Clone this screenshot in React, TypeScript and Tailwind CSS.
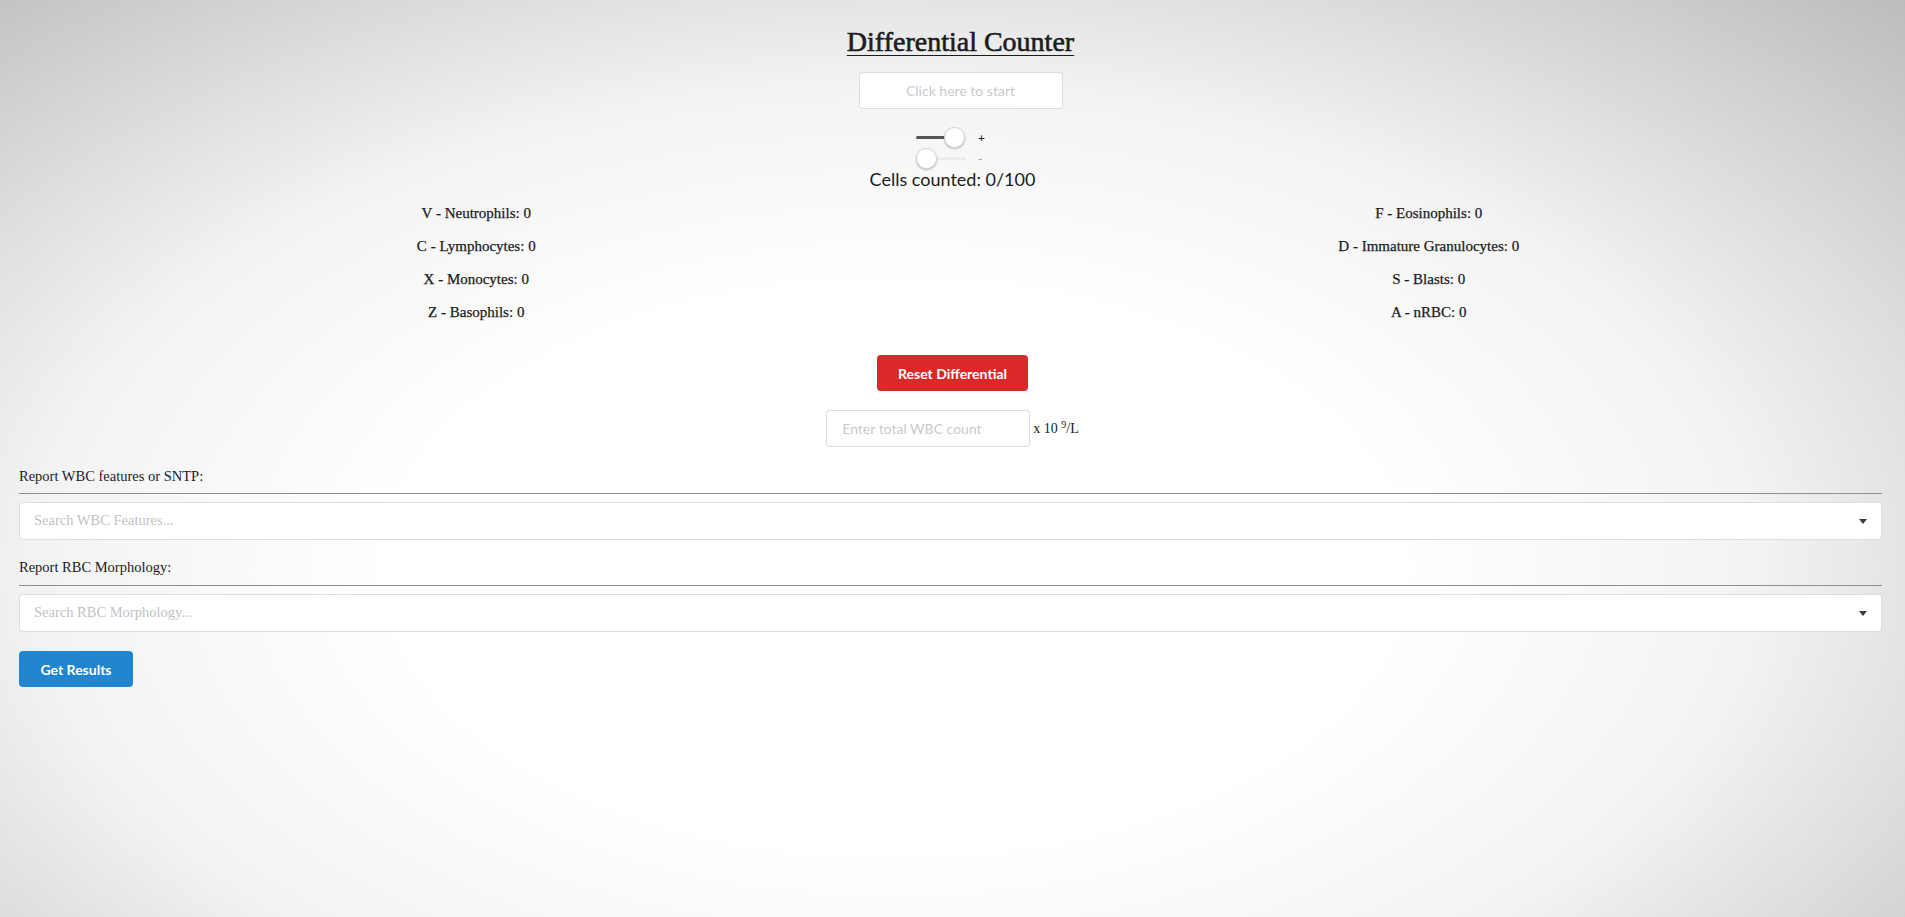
import React, { useState } from "react";

const serif = "font-['Liberation_Serif',serif]";
const lato = "font-['Lato','Liberation_Sans',sans-serif]";

type Cell = { key: string; name: string };

const leftCells: Cell[] = [
    { key: "V", name: "Neutrophils" },
    { key: "C", name: "Lymphocytes" },
    { key: "X", name: "Monocytes" },
    { key: "Z", name: "Basophils" },
];

const rightCells: Cell[] = [
    { key: "F", name: "Eosinophils" },
    { key: "D", name: "Immature Granulocytes" },
    { key: "S", name: "Blasts" },
    { key: "A", name: "nRBC" },
];

const Caret = () => (
    <svg width="8" height="5" viewBox="0 0 8 5" className="shrink-0">
        <path d="M0 0 L8 0 L4 5 Z" fill="#3a3a3a" />
    </svg>
);

// little range slider, thumb sits over the track
const MiniSlider = ({ value }: { value: number }) => {
    const pos = Math.round(value * 28);
    return (
        <div className="relative w-[50px] h-[21px]">
            <div className="absolute left-0 right-0 top-[9px] h-[3px] rounded bg-[#ececec]" />
            <div className="absolute left-0 top-[9px] h-[3px] rounded bg-[#555]" style={{ width: pos + 10 }} />
            <div
                className="absolute top-0 w-[21px] h-[21px] rounded-full bg-white border border-[#d6d6d6] shadow-[0_1px_2px_rgba(0,0,0,0.25)]"
                style={{ left: pos }}
            />
        </div>
    );
};

const SearchSelect = ({ placeholder }: { placeholder: string }) => (
    <div className="flex items-center justify-between h-[38px] bg-white border border-[rgba(34,36,38,0.15)] rounded-[4px] pl-[14px] pr-[14px]">
        <span className={`${serif} text-[14.5px] text-[rgba(185,185,185,0.9)]`}>{placeholder}</span>
        <Caret />
    </div>
);

export default function App() {
    const [counts] = useState<Record<string, number>>({});
    const total = Object.values(counts).reduce((a, b) => a + b, 0);

    return (
        <div className="min-h-screen w-full bg-[radial-gradient(ellipse_at_47%_62%,#ffffff_35%,#f3f3f3_60%,#bcbcbc_100%)] text-[#1b1c1d]">
            <div className="flex flex-col items-center pt-[24px] pl-[16px]">
                <h1 className={`${serif} text-[28px] leading-[36px] underline decoration-1 underline-offset-[4px] [-webkit-text-stroke:0.6px_#1b1c1d]`}>
                    Differential Counter
                </h1>
                <input
                    readOnly
                    placeholder="Click here to start"
                    className={`${lato} mt-[12px] w-[204px] h-[37px] bg-white border border-[rgba(34,36,38,0.15)] rounded-[4px] text-center text-[14px] placeholder:text-[rgba(191,191,191,0.87)] outline-none`}
                />
            </div>
            <div className="flex flex-col items-center">
                <div className="mt-[18px] flex items-center gap-[12px] mr-[3px]">
                    <MiniSlider value={1} />
                    <span className={`${lato} w-[8px] text-[12px] leading-none`}>+</span>
                </div>
                <div className="flex items-center gap-[12px] mr-[3px]">
                    <MiniSlider value={0} />
                    <span className={`${lato} w-[8px] text-[12px] leading-none text-[#999]`}>-</span>
                </div>
                <div className={`${lato} text-[18px] leading-[20px]`}>Cells counted: {total}/100</div>
            </div>

            <div className={`${serif} mt-[8px] grid grid-cols-2 text-[15px] [-webkit-text-stroke:0.25px_#1b1c1d]`}>
                {[leftCells, rightCells].map((col, i) => (
                    <div key={i} className="flex flex-col items-center">
                        {col.map((c) => (
                            <div key={c.key} className="h-[33px] flex items-center">
                                {c.key} - {c.name}: {counts[c.key] ?? 0}
                            </div>
                        ))}
                    </div>
                ))}
            </div>

            <div className="flex flex-col items-center">
                <button className={`${lato} mt-[26px] h-[36px] px-[21px] rounded-[4px] bg-[#db2828] text-white text-[14px] font-bold`}>
                    Reset Differential
                </button>
                <div className="mt-[19px] flex items-center gap-[3px]">
                    <input
                        placeholder="Enter total WBC count"
                        className={`${lato} w-[204px] h-[37px] bg-white border border-[rgba(34,36,38,0.15)] rounded-[4px] px-[15px] text-[14px] placeholder:text-[rgba(191,191,191,0.87)] outline-none`}
                    />
                    <span className={`${serif} text-[14px]`}>
                        x 10 <sup className="text-[10px]">9</sup>/L
                    </span>
                </div>
            </div>

            <div className="pl-[19px] pr-[23px]">
                <div className={`${serif} mt-[19px] text-[14.5px] leading-[20px]`}>Report WBC features or SNTP:</div>
                <div className="mt-[7px] border-t border-[#8f8f8f]" />
                <div className="mt-[8px]">
                    <SearchSelect placeholder="Search WBC Features..." />
                </div>

                <div className={`${serif} mt-[17px] text-[14.5px] leading-[20px]`}>Report RBC Morphology:</div>
                <div className="mt-[8px] border-t border-[#8f8f8f]" />
                <div className="mt-[8px]">
                    <SearchSelect placeholder="Search RBC Morphology..." />
                </div>

                <button className={`${lato} mt-[19px] h-[36px] w-[114px] rounded-[4px] bg-[#2185d0] text-white text-[14px] font-bold`}>
                    Get Results
                </button>
            </div>
        </div>
    );
}
